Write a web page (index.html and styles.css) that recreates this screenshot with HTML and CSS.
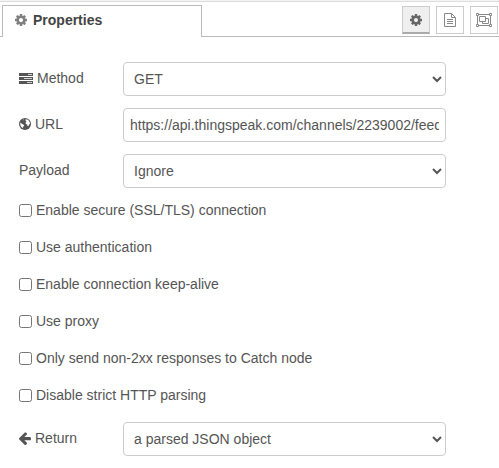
FILE: index.html
```html
<!DOCTYPE html>
<html lang="en">
<head>
<meta charset="utf-8">
<title>Properties</title>
<link rel="stylesheet" href="styles.css">
</head>
<body>
<svg class="defs" width="0" height="0">
  <symbol id="cog" viewBox="0 -128 1536 1536"><path fill-rule="evenodd" d="M1024 640q0 106-75 181t-181 75-181-75-75-181 75-181 181-75 181 75 75 181zm512-109v222q0 12-8 23t-20 13l-185 28q-19 54-39 91 35 50 107 138 10 12 10 25t-9 23q-27 37-99 108t-94 71q-12 0-26-9l-138-108q-44 23-91 38-16 136-29 186-7 28-36 28h-222q-14 0-24.5-8.5t-11.5-21.5l-28-184q-49-16-90-37l-141 107q-10 9-25 9-14 0-25-11-126-114-165-168-7-10-7-23 0-12 8-23 15-21 51-66.5t54-70.5q-27-50-41-99l-183-27q-13-2-21-12.5t-8-23.5v-222q0-12 8-23t19-13l186-28q14-46 39-92-40-57-107-138-10-12-10-24 0-10 9-23 26-36 98.5-107.5t94.5-71.5q13 0 26 10l138 107q44-23 91-38 16-136 29-186 7-28 36-28h222q14 0 24.5 8.500t11.5 21.5l28 184q49 16 90 37l142-107q9-9 24-9 13 0 25 10 129 119 165 170 7 8 7 22 0 12-8 23-15 21-51 66.5t-54 70.5q26 50 41 98l183 28q13 2 21 12.5t8 23.5z"/></symbol>
</svg>
<header class="tabs">
  <div class="tab"><svg class="tab-icon" width="12" height="12"><use href="#cog"/></svg><span>Properties</span></div>
  <nav class="actions">
    <button class="action selected" aria-label="Properties"><svg width="12" height="12"><use href="#cog"/></svg></button>
    <button class="action" aria-label="Description"><svg width="12" height="14" viewBox="0 0 12 14" fill="none" stroke="currentColor"><path d="M.5.5h7l4 4v9H.5zM7.500.5v4h4M3 6.500h6M3 8.500h6M3 10.500h6"/></svg></button>
    <button class="action" aria-label="Appearance"><svg width="16" height="14" viewBox="0 0 16 14" fill="none" stroke="currentColor"><path d="M2.500 1.500h11M2.500 12.500h11M1.500 2.500v9M14.500 2.500v9M.5.5h2v2h-2zM13.500.5h2v2h-2zM.5 11.500h2v2h-2zM13.500 11.500h2v2h-2zM3.500 3.500h6v5h-6zM9.500 5.500h3v5h-6v-2"/></svg></button>
  </nav>
</header>
<form class="form">
  <div class="row">
    <label class="name" for="method"><svg width="14" height="11" viewBox="0 0 14 11"><path fill-rule="evenodd" d="M0 0h14v3H0zM9 1.200v.7h4v-.7zM0 4h14v3H0zM5 5.200v.7h8v-.7zM0 8h14v3H0zM8 9.200v.7h5v-.7z"/></svg>Method</label>
    <select id="method" class="field"><option>GET</option></select>
  </div>
  <div class="row">
    <label class="name" for="url"><svg width="12" height="12" viewBox="0 0 12 12"><circle cx="6" cy="6" r="6"/><path fill="#fff" d="M6.500 1.200 9 1.800l1.700 2.100.3 1.600-.8.900-.9 1.800-.8-.2-.3-1.400-1.300-.5-.3-1.500 1-.9-.9-.8zM1.200 4.600l1.300.9 1.700.9 1 .9-.5 1-.8.7.2 1.300-1.700-1.200-1-1.800zM4.300 1.500l.9.2-.8.700z"/></svg>URL</label>
    <input id="url" class="field" type="text" value="https://api.thingspeak.com/channels/2239002/feeds.json">
  </div>
  <div class="row">
    <label class="name" for="payload">Payload</label>
    <select id="payload" class="field"><option>Ignore</option></select>
  </div>
  <div class="checks">
    <label class="check"><input type="checkbox">Enable secure (SSL/TLS) connection</label>
    <label class="check"><input type="checkbox">Use authentication</label>
    <label class="check"><input type="checkbox">Enable connection keep-alive</label>
    <label class="check"><input type="checkbox">Use proxy</label>
    <label class="check"><input type="checkbox">Only send non-2xx responses to Catch node</label>
    <label class="check"><input type="checkbox">Disable strict HTTP parsing</label>
  </div>
  <div class="row">
    <label class="name" for="return"><svg width="12" height="13" viewBox="192 140 1472 1600"><path d="M1664 896v128q0 53-32.500 90.500t-84.500 37.500h-704l293 294q38 36 38 90t-38 90l-75 76q-37 37-90 37-52 0-91-37l-651-652q-37-37-37-90 0-52 37-91l651-650q38-38 91-38 52 0 90 38l75 74q38 38 38 91t-38 91l-293 293h704q52 0 84.500 37.500t32.500 90.500z"/></svg>Return</label>
    <select id="return" class="field"><option>a parsed JSON object</option></select>
  </div>
</form>
</body>
</html>
```

FILE: styles.css
```css
* { box-sizing: border-box; }
body {
  margin: 0;
  height: 468px;
  overflow: hidden;
  background: #fff;
  color: #555;
  font: 14px/20px "Liberation Sans", Arial, sans-serif;
}
svg { fill: currentColor; flex: none; }
svg[fill="none"] { fill: none; }
.defs { display: block; }
.tabs {
  display: flex;
  justify-content: space-between;
  height: 37px;
  padding: 5px 1px 0 2px;
  border-top: 1px solid #f3f3f3;
  box-shadow: inset 0 1px #ddd, inset 0 -1px #bbb;
}
.tab {
  display: flex;
  gap: 6px;
  width: 200px;
  height: 32px;
  margin-top: -1px;
  padding: 4px 12px;
  border: 1px solid #bbb;
  border-bottom: 0;
  background: #fff;
  color: #444;
  font-weight: bold;
}
.tab-icon { margin-top: 4px; color: #808080; }
.actions { display: flex; gap: 6px; }
.action {
  display: flex;
  align-items: center;
  justify-content: center;
  width: 28px;
  height: 28px;
  padding: 0;
  border: 1px solid #ccc;
  background: #fff;
  color: #888;
}
.action.selected { background: #efefef; border-bottom: 2px solid #aaa; color: #666; }
.form { padding: 25px 0 0 19px; }
.row { display: flex; height: 34px; margin-bottom: 12px; }
.name { display: flex; align-items: center; gap: 4px; width: 104px; height: 32px; }
.field {
  width: 323px;
  height: 34px;
  padding: 4px 6px;
  border: 1px solid #ccc;
  border-radius: 4px;
  background: #fff;
  color: #555;
  font: inherit;
}
.check { display: flex; align-items: center; height: 20px; margin-bottom: 17px; }
.check input { width: 13px; height: 13px; margin: 0 4px 0 0; }
```
